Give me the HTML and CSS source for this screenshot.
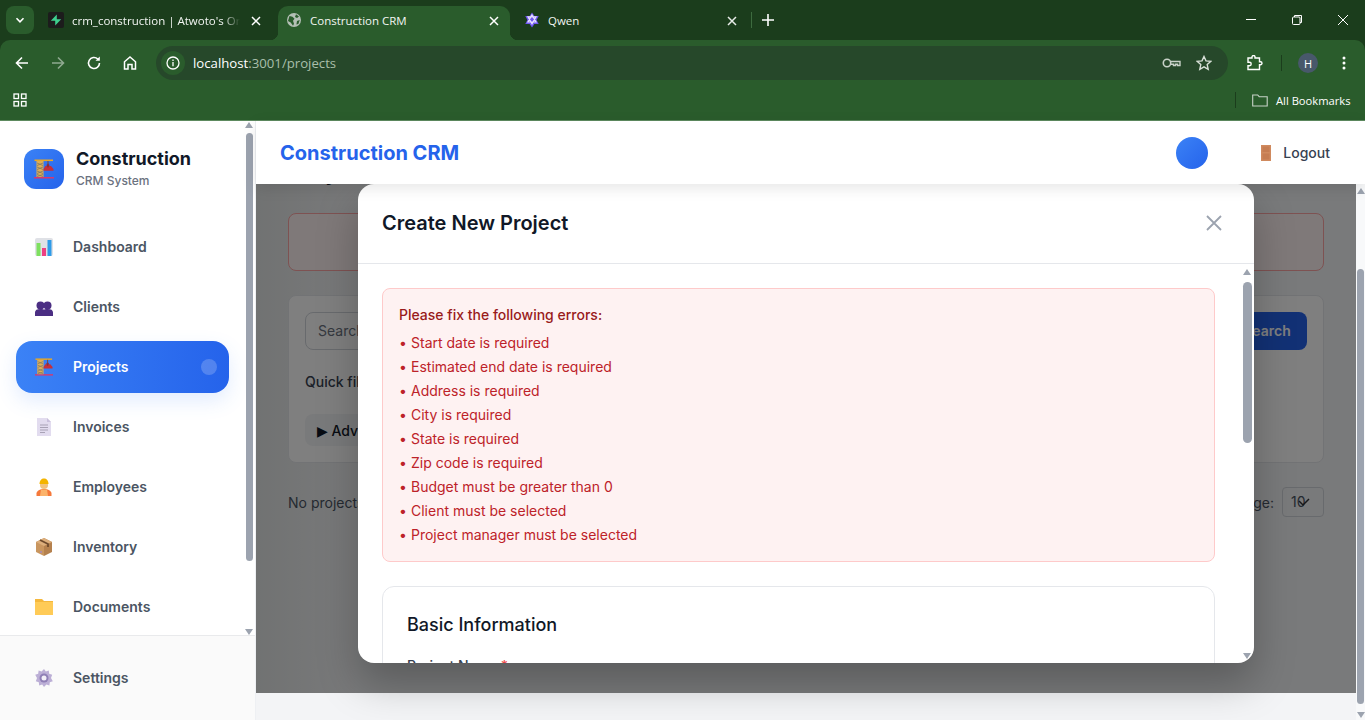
FILE: index.html
```html
<!DOCTYPE html>
<html lang="en">
<head>
  <meta charset="UTF-8" />
  <title>Construction CRM</title>
  <link rel="stylesheet" href="styles.css">
</head>
<body>

<svg class="defs" width="0" height="0">
  <symbol id="crane" viewBox="0 0 20 20">
    <rect x="0" y="18" width="20" height="1.500" fill="#d9376e"/>
    <rect x="2.500" y="2" width="7" height="16" fill="#dfae55"/>
    <path d="M3 4l6 2.500M9 4L3 6.500M3 8l6 2.500M9 8l-6 2.500M3 12l6 2.500M9 12l-6 2.500M3 15.500l6 2M9 15.500l-6 2" stroke="#7f7a68" stroke-width=".8"/>
    <rect x="0.500" y="0.500" width="18.500" height="1.600" fill="#e9a825"/>
    <path d="M14 2v3" stroke="#7a4a3a" stroke-width="1.100"/>
    <path d="M9.500 10l2-3h5.500l2.500 3v1.800H9.500z" fill="#c62f3a"/>
    <path d="M12.500 6l1.500-1.500L15.500 6l-1 2.500h-1z" fill="#8c2f3a"/>
  </symbol>
</svg>

<!-- barra del navegador -->
<div class="browser">
  <div class="tabstrip">
    <button class="tab-menu">
      <svg width="10" height="10" viewBox="0 0 10 10"><path d="M1.500 3.200L5 6.800l3.500-3.600" fill="none" stroke="#fff" stroke-width="1.600"/></svg>
    </button>
    <div class="tab tab-first">
      <span class="favicon-dark">
        <svg width="12" height="12" viewBox="0 0 12 12"><path d="M6.800.6v4.600h4.400L5.200 11.400V6.800H.8z" fill="#3ecf8e"/></svg>
      </span>
      <span class="tab-title tab-fade">crm_construction | Atwoto's Org</span>
      <svg class="tab-x" width="10" height="10" viewBox="0 0 10 10"><path d="M1 1l8 8M9 1L1 9" stroke="#fff" stroke-width="1.500"/></svg>
    </div>
    <div class="tab tab-active">
      <svg class="tab-icon" width="16" height="16" viewBox="0 0 16 16"><circle cx="8" cy="8" r="7" fill="#b4bfb5"/><path d="M3.500 4l3 .8 2 2-1.500 2 1 3-1 2-2.300-3.300-2.700-1.500zM10 2.300l3 2.200-2 1.500-2-1zM11 9l2.700-1-1.300 4-2 .6z" fill="#2a5c2c"/></svg>
      <span class="tab-title">Construction CRM</span>
      <svg class="tab-x" width="10" height="10" viewBox="0 0 10 10"><path d="M1 1l8 8M9 1L1 9" stroke="#fff" stroke-width="1.500"/></svg>
    </div>
    <div class="tab tab-third">
      <svg class="tab-icon" width="16" height="16" viewBox="0 0 16 16"><path d="M8 .5l2.400 3.600h4.300L12.600 8l2.100 3.900h-4.300L8 15.500l-2.400-3.600H1.300L3.400 8 1.300 4.100h4.300z" fill="#6f56f0"/><path d="M4 4.800h8L8 11.800zM8 3l4 7H4z" fill="none" stroke="#e6e0ff" stroke-width="1.200"/></svg>
      <span class="tab-title">Qwen</span>
      <svg class="tab-x" width="10" height="10" viewBox="0 0 10 10"><path d="M1 1l8 8M9 1L1 9" stroke="#e8ece8" stroke-width="1.500"/></svg>
    </div>
    <span class="tab-sep"></span>
    <svg class="tab-plus" width="12" height="12" viewBox="0 0 12 12"><path d="M6 0v12M0 6h12" stroke="#fff" stroke-width="1.600"/></svg>
    <div class="win-buttons">
      <svg width="12" height="12" viewBox="0 0 12 12"><path d="M1 5.500h10" stroke="#fff"/></svg>
      <svg width="12" height="12" viewBox="0 0 12 12"><rect x="1.500" y="3" width="7.500" height="7.500" rx="1" fill="none" stroke="#fff"/><path d="M3.500 3V1.500h7v7H9" fill="none" stroke="#fff"/></svg>
      <svg width="12" height="12" viewBox="0 0 12 12"><path d="M1 1l10 10M11 1L1 11" stroke="#fff"/></svg>
    </div>
  </div>

  <div class="toolbar">
    <svg class="tool" width="16" height="16" viewBox="0 0 16 16"><path d="M14 8H3M8 2.500L2.500 8 8 13.500" fill="none" stroke="#fff" stroke-width="1.600"/></svg>
    <svg class="tool tool-off" width="16" height="16" viewBox="0 0 16 16"><path d="M2 8h11M8 2.500L13.500 8 8 13.500" fill="none" stroke="#8fa990" stroke-width="1.600"/></svg>
    <svg class="tool" width="16" height="16" viewBox="0 0 16 16"><path d="M13.500 8A5.500 5.500 0 1 1 11.800 4" fill="none" stroke="#fff" stroke-width="1.600"/><path d="M13.800 1.500v4.300H9.500z" fill="#fff"/></svg>
    <svg class="tool" width="16" height="16" viewBox="0 0 16 16"><path d="M2.500 14V6.800L8 2l5.500 4.800V14H10V9.500H6V14z" fill="none" stroke="#fff" stroke-width="1.500"/></svg>
    <div class="omnibox">
      <span class="site-info">
        <svg width="14" height="14" viewBox="0 0 14 14"><circle cx="7" cy="7" r="6" fill="none" stroke="#fff" stroke-width="1.300"/><path d="M7 6v4.200M7 3.500v1.400" stroke="#fff" stroke-width="1.300"/></svg>
      </span>
      <span class="url"><b>localhost</b>:3001/projects</span>
      <svg class="omni-key" width="20" height="12" viewBox="0 0 20 12"><circle cx="5" cy="6" r="3.700" fill="none" stroke="#c8d2c8" stroke-width="1.600"/><path d="M8.700 4.500H18v4h-2.500V7.300h-2v1.200h-2V7.300H8.700" fill="none" stroke="#c8d2c8" stroke-width="1.400"/></svg>
      <svg class="omni-star" width="16" height="16" viewBox="0 0 16 16"><path d="M8 1.500l2 4.400 4.700.5-3.500 3.200 1 4.700L8 11.900l-4.200 2.400 1-4.700L1.300 6.400 6 5.900z" fill="none" stroke="#d8e0d8" stroke-width="1.400"/></svg>
    </div>
    <svg class="tool-ext" width="16" height="16" viewBox="0 0 16 16"><path d="M1 3h4V2a1.500 1.500 0 0 1 3 0v1h4.500v3.800h1a1.500 1.500 0 0 1 0 3h-1V14.500H1v-3.800h1.500a1.700 1.700 0 0 0 0-3.400H1z" fill="none" stroke="#fff" stroke-width="1.400"/></svg>
    <span class="tool-sep"></span>
    <span class="profile">H</span>
    <svg class="tool-dots" width="4" height="14" viewBox="0 0 4 14"><circle cx="2" cy="2" r="1.500" fill="#fff"/><circle cx="2" cy="7" r="1.500" fill="#fff"/><circle cx="2" cy="12" r="1.500" fill="#fff"/></svg>
  </div>

  <div class="bookmarks">
    <svg width="14" height="14" viewBox="0 0 14 14"><g fill="none" stroke="#fff" stroke-width="1.300"><rect x="1" y="1" width="4.500" height="4.500"/><rect x="8.500" y="1" width="4.500" height="4.500"/><rect x="1" y="8.500" width="4.500" height="4.500"/><rect x="8.500" y="8.500" width="4.500" height="4.500"/></g></svg>
    <span class="bm-sep"></span>
    <svg class="bm-folder" width="16" height="13" viewBox="0 0 16 13"><path d="M.7 1h5l1.500 1.700h8V12H.7z" fill="none" stroke="#c8d2c8" stroke-width="1.100"/></svg>
    <span class="bm-label">All Bookmarks</span>
  </div>
</div>

<div class="app">
  <aside class="sidebar">
    <div class="side-top">
      <div class="side-scroll">
        <div class="brand">
          <div class="brand-logo"><svg width="20" height="20"><use href="#crane"/></svg></div>
          <div>
            <div class="brand-name">Construction</div>
            <div class="brand-sub">CRM System</div>
          </div>
        </div>
        <nav class="nav">
          <a class="nav-item">
            <svg class="nav-icon" viewBox="0 0 18 18"><rect x="0" y="0" width="18" height="18" rx="2" fill="#dfe1e6"/><rect x="1.500" y="5" width="4" height="13" fill="#7ee05f"/><rect x="7" y="10" width="4" height="8" fill="#ee3f82"/><rect x="12.500" y="2" width="4" height="16" fill="#2f9be8"/></svg>
            Dashboard
          </a>
          <a class="nav-item">
            <svg class="nav-icon" viewBox="0 0 18 18"><g fill="#4b2e83"><circle cx="5.500" cy="7.500" r="4"/><circle cx="12.500" cy="7.500" r="4"/><path d="M0 18v-3.500c0-2.500 2-3.500 5.500-3.500 2 0 3.500.5 3.500.5s1.500-.5 3.500-.5C16 11 18 12 18 14.500V18z"/></g></svg>
            Clients
          </a>
          <a class="nav-item active">
            <svg class="nav-icon"><use href="#crane"/></svg>
            Projects
            <span class="nav-dot"></span>
          </a>
          <a class="nav-item">
            <svg class="nav-icon" viewBox="0 0 18 18"><path d="M2 0h10l4 4v14H2z" fill="#e2dcef"/><path d="M12 0l4 4h-4z" fill="#c9c0dc"/><path d="M5 7h8M5 9.500h8M5 12h8M5 14.500h5" stroke="#a8a2b5"/></svg>
            Invoices
          </a>
          <a class="nav-item">
            <svg class="nav-icon" viewBox="0 0 18 18"><path d="M1.500 18v-2.500C1.500 13 5 11 9 11s7.500 2 7.500 4.500V18z" fill="#f5793b"/><path d="M6 11.500h6l1 6.500H5z" fill="#fbb36b"/><circle cx="9" cy="7" r="4" fill="#f2c37e"/><path d="M4.500 6C4.500 2.500 6.500.5 9 .5s4.500 2 4.500 5.500z" fill="#f4b400"/></svg>
            Employees
          </a>
          <a class="nav-item">
            <svg class="nav-icon" viewBox="0 0 18 18"><path d="M9 0l8 4v10l-8 4z" fill="#b5814e"/><path d="M9 0L1 4v10l8 4z" fill="#c9965f"/><path d="M1 4l8 4 8-4-8-4z" fill="#dcae7b"/><path d="M5 2l8 4v3" fill="none" stroke="#6e4a2c" stroke-width="1.800"/><circle cx="6" cy="14" r="1" fill="#a78bb8"/></svg>
            Inventory
          </a>
          <a class="nav-item">
            <svg class="nav-icon" viewBox="0 0 18 18"><path d="M0 1h7l2 2h9v14H0z" fill="#f5b83d"/><rect x="0" y="4" width="18" height="13" fill="#ffcb57"/></svg>
            Documents
          </a>
        </nav>
      </div>
    </div>
    <div class="side-foot">
      <a class="nav-item">
        <svg class="nav-icon" viewBox="0 0 18 18"><path d="M9 0l1.800 2.500 3-.9.400 3.100 3 1L16 9l1.800 3.300-3 1-.4 3.100-3-.9L9 18l-1.800-2.500-3 .9-.4-3.100-3-1L2 9 .2 5.700l3-1 .4-3.100 3 .9z" fill="#bcafd6"/><circle cx="9" cy="9" r="4.500" fill="#8f7fb6"/><circle cx="9" cy="9" r="2.500" fill="#f2eff7"/></svg>
        Settings
      </a>
    </div>
    <div class="side-bar">
      <span class="arrow-up"></span>
      <span class="side-thumb"></span>
      <span class="arrow-down"></span>
    </div>
  </aside>

  <div class="main">
    <header class="topbar">
      <div class="topbar-title">Construction CRM</div>
      <span class="user-dot"></span>
      <a class="logout">
        <svg width="10" height="16" viewBox="0 0 10 16"><rect width="10" height="16" fill="#d08a5e"/><rect x="1.500" y="1.500" width="7" height="5.500" fill="#c67d52"/><rect x="1.500" y="8.500" width="7" height="6" fill="#c67d52"/></svg>
        Logout
      </a>
    </header>

    <div class="content">
      <div class="page-area">
        <!-- pagina de proyectos (queda detras del modal) -->
        <div class="page">
          <h1 class="page-title">Projects</h1>
          <div class="page-alert"></div>
          <div class="filters">
            <div class="search-row">
              <div class="search-input">Search projects...</div>
              <button class="search-btn">Search</button>
            </div>
            <div class="quick">Quick filters:</div>
            <button class="adv-btn"><span class="adv-arrow">▶</span> Advanced</button>
          </div>
          <div class="results">
            <span>No projects found</span>
            <span class="per-page">Items per page:
              <span class="per-select">10
                <svg class="per-chev" width="12" height="9" viewBox="0 0 12 9"><path d="M1 3l4 4 6-6" fill="none" stroke="#2f3136" stroke-width="1.500"/></svg>
              </span>
            </span>
          </div>
        </div>

        <div class="overlay">
          <div class="modal">
            <div class="modal-head">
              <h2>Create New Project</h2>
              <svg width="16" height="16" viewBox="0 0 16 16"><path d="M1 1l14 14M15 1L1 15" stroke="#9ca3af" stroke-width="1.800"/></svg>
            </div>
            <div class="modal-body">
              <div class="modal-scroll">
                <div class="errors">
                  <h4>Please fix the following errors:</h4>
                  <ul>
                    <li>Start date is required</li>
                    <li>Estimated end date is required</li>
                    <li>Address is required</li>
                    <li>City is required</li>
                    <li>State is required</li>
                    <li>Zip code is required</li>
                    <li>Budget must be greater than 0</li>
                    <li>Client must be selected</li>
                    <li>Project manager must be selected</li>
                  </ul>
                </div>
                <div class="section">
                  <h3>Basic Information</h3>
                  <label>Project Name <span class="req">*</span></label>
                </div>
              </div>
              <div class="modal-bar">
                <span class="arrow-up"></span>
                <span class="modal-thumb"></span>
                <span class="arrow-down"></span>
              </div>
            </div>
          </div>
        </div>
      </div>
      <div class="page-bar">
        <span class="arrow-up"></span>
        <span class="page-thumb"></span>
        <span class="arrow-down"></span>
      </div>
    </div>
  </div>
</div>

</body>
</html>
```

FILE: styles.css
```css
* {
  box-sizing: border-box;
}

html, body {
  margin: 0;
  height: 720px;
  overflow: hidden;
}

body {
  font-family: 'Inter', 'Liberation Sans', sans-serif;
  background: #f3f4f6;
  color: #111827;
}

.defs {
  position: absolute;
}

/* navegador */
.browser {
  height: 121px;
  background: #1b3d1c;
  font-family: 'Open Sans', 'Liberation Sans', sans-serif;
  color: #fff;
  font-size: 11.5px;
}

.tabstrip {
  height: 40px;
  display: flex;
  align-items: flex-end;
  padding-left: 6px;
  position: relative;
}

.tab-menu {
  width: 28px;
  height: 28px;
  margin-bottom: 6px;
  padding: 0;
  border: none;
  border-radius: 8px;
  background: #2a5c2c;
  display: flex;
  align-items: center;
  justify-content: center;
}

.tab {
  height: 34px;
  padding-bottom: 6px;
  display: flex;
  align-items: center;
  position: relative;
}

.tab-first {
  width: 241px;
  margin-left: 3px;
  padding-left: 11px;
}

.tab-first .tab-x {
  right: 17px;
}

.tab-active {
  width: 232px;
  padding-left: 8px;
  background: #2a5c2c;
  border-radius: 10px 10px 0 0;
}

.tab-active::before, .tab-active::after {
  content: "";
  position: absolute;
  bottom: 0;
  width: 8px;
  height: 8px;
}

.tab-active::before {
  left: -8px;
  background: radial-gradient(circle at 0 0, transparent 8px, #2a5c2c 8.5px);
}

.tab-active::after {
  right: -8px;
  background: radial-gradient(circle at 100% 0, transparent 8px, #2a5c2c 8.5px);
}

.tab-third {
  width: 232px;
  padding-left: 14px;
}

.tab-third .tab-x {
  right: 5px;
}

.favicon-dark {
  width: 16px;
  height: 16px;
  background: #1c1c1c;
  border-radius: 2px;
  display: flex;
  align-items: center;
  justify-content: center;
  flex: none;
}

.tab-title {
  margin-left: 8px;
  white-space: nowrap;
  color: #f2f5f2;
}

.tab-fade {
  width: 168px;
  overflow: hidden;
  -webkit-mask-image: linear-gradient(90deg, #000 90%, transparent);
}

.tab-x {
  position: absolute;
  right: 11px;
  top: 10px;
}

.tab-sep {
  width: 1px;
  height: 16px;
  background: #3d6b3f;
  margin: 0 0 12px 9px;
}

.tab-plus {
  margin: 0 0 14px 10px;
}

.win-buttons {
  position: absolute;
  right: 16px;
  top: 14px;
  display: flex;
  gap: 34px;
}

.toolbar {
  height: 40px;
  background: #2a5c2c;
  border-radius: 10px 10px 0 0;
  display: flex;
  align-items: center;
  padding: 6px 0 0 14px;
}

.tool {
  margin-right: 20px;
  flex: none;
}

.omnibox {
  width: 1072px;
  height: 34px;
  margin-left: -2px;
  border-radius: 17px;
  background: #26482a;
  display: flex;
  align-items: center;
  padding-left: 5px;
  flex: none;
}

.site-info {
  width: 24px;
  height: 24px;
  border-radius: 50%;
  background: #2a5c2c;
  display: flex;
  align-items: center;
  justify-content: center;
}

.url {
  margin-left: 8px;
  font-size: 13.2px;
  color: #a9bfaa;
  flex: 1;
}

.url b {
  font-weight: 400;
  color: #fff;
}

.omni-key {
  margin-right: 14px;
}

.omni-star {
  margin-right: 16px;
}

.tool-ext {
  margin-left: 19px;
}

.tool-sep {
  width: 1px;
  height: 16px;
  background: #1b3d1c;
  margin-left: 18px;
}

.profile {
  width: 20px;
  height: 20px;
  margin-left: 16px;
  border-radius: 50%;
  background: #48586b;
  font-size: 11px;
  display: flex;
  align-items: center;
  justify-content: center;
}

.tool-dots {
  margin-left: 24px;
}

.bookmarks {
  height: 41px;
  background: #2a5c2c;
  border-bottom: 1px solid #5d8a5f;
  display: flex;
  align-items: center;
  padding-left: 13px;
}

.bm-sep {
  width: 1px;
  height: 16px;
  background: #1b3d1c;
  margin-left: auto;
}

.bm-folder {
  margin-left: 16px;
}

.bm-label {
  width: 76px;
  margin: 0 13px 0 8px;
  font-size: 11.2px;
  white-space: nowrap;
}

/* app */
.app {
  height: 599px;
  display: flex;
}

.sidebar {
  width: 256px;
  background: #fff;
  border-right: 1px solid #eef0f3;
  position: relative;
  flex: none;
  display: flex;
  flex-direction: column;
}

.side-top {
  height: 514px;
  overflow: hidden;
}

.side-scroll {
  padding: 26px 26px 0 16px;
}

.brand {
  display: flex;
  align-items: center;
  gap: 12px;
  padding-left: 8px;
  margin-bottom: 31px;
}

.brand-logo {
  width: 40px;
  height: 40px;
  border-radius: 12px;
  background: linear-gradient(135deg, #3b82f6, #2563eb);
  display: flex;
  align-items: center;
  justify-content: center;
}

.brand-name {
  font-size: 18px;
  font-weight: 700;
  line-height: 24px;
  color: #111827;
}

.brand-sub {
  font-size: 12px;
  font-weight: 500;
  line-height: 18px;
  margin-top: 1px;
  color: #6b7280;
}

.nav {
  display: flex;
  flex-direction: column;
  gap: 8px;
}

.nav-item {
  height: 52px;
  width: 213px;
  padding-left: 19px;
  padding-bottom: 1px;
  border-radius: 16px;
  display: flex;
  align-items: center;
  gap: 20px;
  font-size: 14px;
  font-weight: 600;
  color: #4b5563;
}

.nav-icon {
  width: 18px;
  height: 18px;
  flex: none;
}

.nav-item.active {
  background: linear-gradient(90deg, #3b82f6, #2563eb);
  color: #fff;
  box-shadow: 0 8px 20px rgba(59, 130, 246, 0.15);
}

.nav-dot {
  width: 16px;
  height: 16px;
  margin-left: auto;
  margin-right: 12px;
  border-radius: 50%;
  background: rgba(255, 255, 255, 0.2);
}

.side-foot {
  flex: 1;
  background: #fafafa;
  border-top: 1px solid #e9eaec;
  padding: 16px 0 0 16px;
}

.side-bar {
  position: absolute;
  top: 1px;
  right: 1px;
  width: 10px;
  height: 513px;
  display: flex;
  flex-direction: column;
  align-items: center;
  justify-content: space-between;
}

.side-thumb {
  position: absolute;
  top: 11px;
  width: 7px;
  height: 428px;
  border-radius: 4px;
  background: #9ca3af;
}

.arrow-up, .arrow-down {
  width: 0;
  height: 0;
  border-left: 4.5px solid transparent;
  border-right: 4.5px solid transparent;
}

.arrow-up {
  border-bottom: 6px solid #9ca3af;
}

.arrow-down {
  border-top: 6px solid #9ca3af;
}

.main {
  flex: 1;
  min-width: 0;
  display: flex;
  flex-direction: column;
}

.topbar {
  height: 63px;
  background: #fff;
  display: flex;
  align-items: center;
  padding: 0 35px 0 24px;
  position: relative;
  z-index: 5;
  box-shadow: 0 4px 14px rgba(0, 0, 0, 0.1);
  flex: none;
}

.topbar-title {
  font-size: 20px;
  font-weight: 700;
  color: #2563eb;
  flex: 1;
}

.user-dot {
  width: 32px;
  height: 32px;
  border-radius: 50%;
  background: linear-gradient(135deg, #3b82f6, #2563eb);
}

.logout {
  margin-left: 53px;
  display: flex;
  align-items: center;
  gap: 12px;
  font-size: 14px;
  font-weight: 500;
  color: #374151;
}

.content {
  flex: 1;
  min-height: 0;
  display: flex;
}

.page-area {
  flex: 1;
  min-width: 0;
  position: relative;
  overflow: hidden;
}

/* pagina detras del modal */
.page {
  padding: 0 32px;
  margin-top: -28px;
  height: 537px;
  background: linear-gradient(90deg, #e2e5e5, #f3f4f6 100px);
}

.page-title {
  margin: 0;
  font-size: 24px;
  line-height: 32px;
  font-weight: 700;
}

.page-alert {
  height: 58px;
  margin-top: 25px;
  border: 1px solid #fca5a5;
  border-radius: 8px;
  background: #fef2f2;
}

.filters {
  height: 168px;
  margin-top: 24px;
  padding: 16px;
  background: #fff;
  border: 1px solid #e5e7eb;
  border-radius: 8px;
}

.search-row {
  display: flex;
  gap: 12px;
  height: 38px;
}

.search-input {
  flex: 1;
  border: 1px solid #d1d5db;
  border-radius: 8px;
  padding: 0 12px;
  font-size: 14px;
  line-height: 36px;
  color: #6b7280;
}

.search-btn {
  width: 80px;
  padding: 0 0 2px;
  border: none;
  border-radius: 8px;
  background: #2563eb;
  color: #fff;
  font-family: inherit;
  font-size: 14px;
  font-weight: 600;
}

.quick {
  margin-top: 22px;
  font-size: 14px;
  font-weight: 500;
  line-height: 20px;
  color: #374151;
}

.adv-btn {
  display: block;
  margin-top: 22px;
  height: 32px;
  width: 140px;
  padding: 0 12px;
  text-align: left;
  border: none;
  border-radius: 8px;
  background: #f3f4f6;
  font-family: inherit;
  font-size: 14px;
  font-weight: 500;
  color: #111827;
}

.adv-arrow {
  font-family: 'DejaVu Sans', sans-serif;
  font-size: 14px;
}

.results {
  margin-top: 24px;
  height: 30px;
  display: flex;
  align-items: center;
  justify-content: space-between;
  font-size: 14px;
  color: #4b5563;
}

.per-page {
  display: flex;
  align-items: center;
  gap: 8px;
}

.per-select {
  width: 42px;
  height: 30px;
  padding-left: 8px;
  line-height: 28px;
  border: 1px solid #d1d5db;
  border-radius: 4px;
  position: relative;
}

.per-chev {
  position: absolute;
  left: 15px;
  top: 10px;
}

/* modal */
.overlay {
  position: absolute;
  left: 0;
  top: 0;
  right: 0;
  height: 509px;
  background: rgba(0, 0, 0, 0.5);
  display: flex;
  justify-content: center;
  align-items: flex-start;
}

.modal {
  width: 896px;
  height: 479px;
  background: #fff;
  border-radius: 16px;
  overflow: hidden;
  box-shadow: 0 20px 40px rgba(0, 0, 0, 0.25);
  display: flex;
  flex-direction: column;
}

.modal-head {
  height: 80px;
  padding: 0 32px 2px 24px;
  border-bottom: 1px solid #e5e7eb;
  display: flex;
  align-items: center;
  justify-content: space-between;
  flex: none;
}

.modal-head h2 {
  margin: 0;
  font-size: 20px;
  font-weight: 600;
  color: #111827;
}

.modal-body {
  flex: 1;
  min-height: 0;
  display: flex;
}

.modal-scroll {
  flex: 1;
  min-width: 0;
  padding: 24px 26px 0 24px;
  overflow: hidden;
}

.errors {
  height: 274px;
  padding: 16px;
  background: #fef2f2;
  border: 1px solid #fecaca;
  border-radius: 8px;
}

.errors h4 {
  margin: 0 0 6px;
  font-size: 14px;
  font-weight: 500;
  line-height: 20px;
  color: #991b1b;
}

.errors ul {
  margin: 0;
  padding: 0;
  list-style: none;
}

.errors li {
  font-size: 14px;
  line-height: 24px;
  color: #bd2229;
}

.errors li::before {
  content: "•";
  display: inline-block;
  width: 12px;
}

.section {
  margin-top: 24px;
  height: 200px;
  padding: 24px;
  border: 1px solid #e5e7eb;
  border-radius: 12px;
}

.section h3 {
  margin: 0 0 16px;
  font-size: 18px;
  font-weight: 500;
  line-height: 28px;
  color: #111827;
}

.section label {
  font-size: 14px;
  font-weight: 500;
  color: #374151;
}

.req {
  color: #ef4444;
}

.modal-bar {
  width: 12px;
  margin-right: 1px;
  padding: 5px 0 4px;
  position: relative;
  display: flex;
  flex-direction: column;
  align-items: center;
  justify-content: space-between;
  flex: none;
}

.modal-thumb {
  position: absolute;
  top: 18px;
  width: 9px;
  height: 161px;
  border-radius: 5px;
  background: #9ca3af;
}

.page-bar {
  width: 9px;
  background: #f8f9fa;
  padding: 4px 0 2px;
  position: relative;
  display: flex;
  flex-direction: column;
  align-items: center;
  justify-content: space-between;
  flex: none;
}

.page-thumb {
  position: absolute;
  top: 85px;
  width: 7px;
  height: 435px;
  border-radius: 4px;
  background: #9ca3af;
}
```
